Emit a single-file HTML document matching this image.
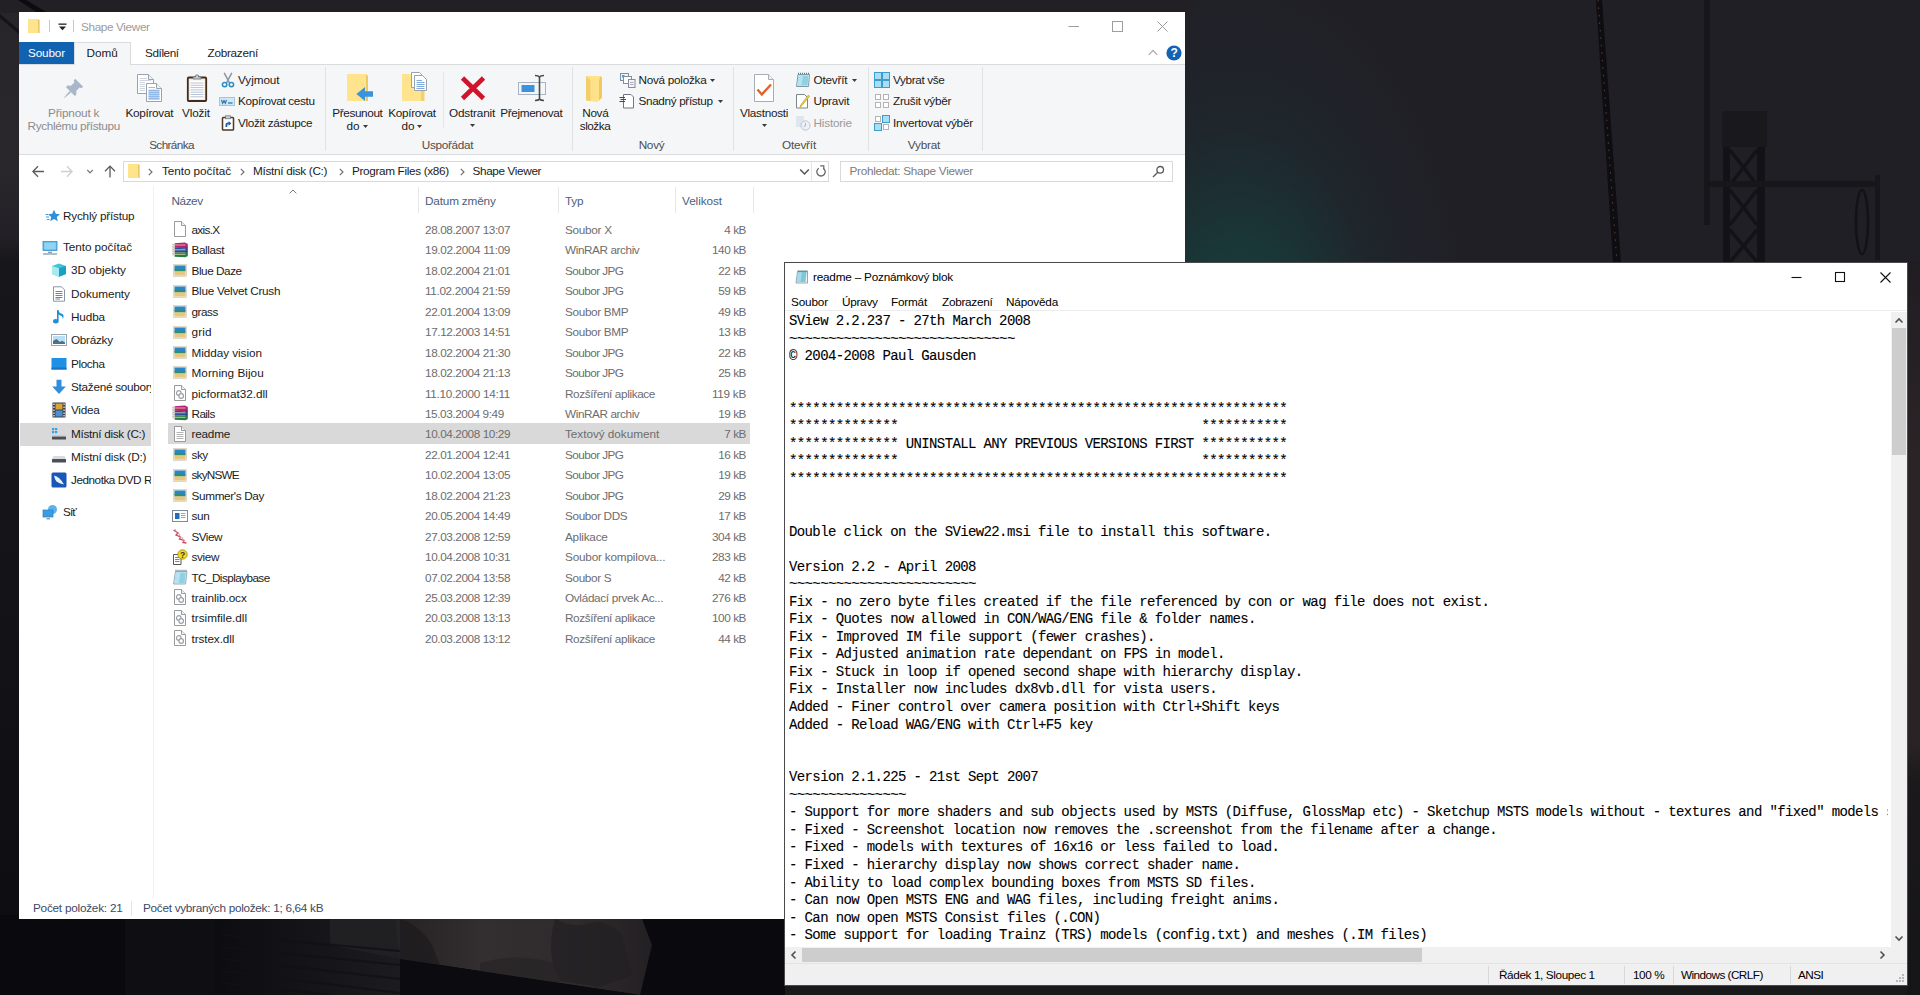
<!DOCTYPE html>
<html lang="cs">
<head>
<meta charset="utf-8">
<title>Shape Viewer</title>
<style>
*{box-sizing:border-box;margin:0;padding:0}
html,body{width:1920px;height:995px;overflow:hidden;background:#222027}
body{position:relative;font-family:"Liberation Sans",sans-serif;font-size:11.5px;letter-spacing:-0.15px;color:#1b1b1b}
.abs{position:absolute}
#desk{position:absolute;left:0;top:0;width:1920px;height:995px;overflow:hidden;background:#232128}
/* ---------- Explorer ---------- */
#ex{position:absolute;left:19px;top:12px;width:1166px;height:907px;background:#fff;overflow:hidden}
#ex .t{position:absolute;white-space:nowrap;line-height:14px}
#ribbon{position:absolute;left:0;top:52px;width:1166px;height:91px;background:#f5f6f7;border-top:1px solid #dadbdc;border-bottom:1px solid #dadbdc}
.sep{position:absolute;top:58px;width:1px;height:84px;background:#e2e3e4}
.gl{color:#4d4d4d}
.gr{color:#6d6d6d}
.row{position:absolute;left:148px;width:583px;height:20px}
/* ---------- Notepad ---------- */
#np{position:absolute;left:784px;top:262px;width:1124px;height:724px;background:#fff;border:1px solid #4a4a4c;overflow:hidden}
#np .t{position:absolute;white-space:nowrap;line-height:14px;color:#000}
#txt{position:absolute;left:4px;top:50px;width:1099px;height:634px;overflow:hidden;white-space:pre;font-family:"Liberation Mono",monospace;font-size:14px;letter-spacing:-0.62px;line-height:17.54px;color:#000;-webkit-text-stroke:0.1px #000}
</style>
</head>
<body>
<!--ICONS--><!--/ICONS-->
<div id="desk">
<!--DESK-->
<div class="abs" style="left:0;top:0;width:1920px;height:995px;background:radial-gradient(ellipse 235px 400px at 1238px 370px, rgba(22,72,66,0.95) 0%, rgba(22,66,62,0.7) 30%, rgba(26,50,54,0.35) 62%, rgba(33,31,38,0) 100%),#211f26"></div>
<!-- left strip -->
<div class="abs" style="left:0;top:0;width:20px;height:995px;background:linear-gradient(180deg,#27242a 0,#29262c 170px,#232127 235px,#17161b 262px,#141318 600px,#0c0b0f 995px)"></div>
<!-- top strip -->
<div class="abs" style="left:0;top:0;width:1190px;height:13px;background:#221f25"></div>
<svg class="abs" style="left:0;top:0" width="120" height="60" viewBox="0 0 120 60"><path d="M18 0 L26 0 L48 13 L38 13 Z" fill="#0c0b0f"/><path d="M0 14 L19 30 L19 34 L0 18 Z" fill="#141317"/></svg>
<!-- bottom strip -->
<svg class="abs" style="left:0;top:915px" width="790" height="80" viewBox="0 0 790 80">
  <defs>
    <linearGradient id="bsky" x1="0" y1="0" x2="1" y2="0"><stop offset="0" stop-color="#262325"/><stop offset="0.35" stop-color="#332e2f"/><stop offset="0.7" stop-color="#2f2b2d"/><stop offset="1" stop-color="#232023"/></linearGradient>
    <linearGradient id="bwall" x1="0" y1="0" x2="1" y2="0"><stop offset="0" stop-color="#0d0c10"/><stop offset="1" stop-color="#1c1b1e"/></linearGradient>
  </defs>
  <rect x="0" y="0" width="790" height="80" fill="#0a090d"/>
  <rect x="125" y="0" width="90" height="80" fill="#0f0e12"/>
  <path d="M215 4 H400 V80 H215 Z" fill="url(#bwall)"/>
  <path d="M330 4 L400 4 L400 44 L330 30 Z" fill="#201f22"/>
  <path d="M395 4 H642 L652 30 L640 80 L400 44 Z" fill="url(#bsky)"/>
  <path d="M400 44 L640 80 L400 80 Z" fill="#0c0b0f"/>
  <path d="M400 4 Q420 10 432 30 L440 50 L400 44 Z" fill="#1e1b1e" opacity="0.8"/>
  <path d="M555 4 Q575 14 590 8 Q610 4 622 20 L632 60 L600 72 L560 66 Q545 40 555 4 Z" fill="#232023" opacity="0.75"/>
  <path d="M480 48 Q520 36 560 50 L560 68 L480 56 Z" fill="#262326" opacity="0.7"/>
  <g stroke="#121115" stroke-width="2" opacity="0.8"><path d="M222 20 L400 36 M222 32 L400 50 M222 44 L400 64 M222 56 L400 78 M222 68 L330 80"/></g>
</svg>
<!-- below notepad & right strip -->
<div class="abs" style="left:785px;top:985px;width:1135px;height:10px;background:#19181b"></div>
<div class="abs" style="left:1907px;top:262px;width:13px;height:733px;background:linear-gradient(180deg,#201d22 0,#2b2427 200px,#2a2325 480px,#1b191b 520px,#151416 733px)"></div>
<!-- railway mast silhouettes -->
<svg class="abs" style="left:1185px;top:0" width="735" height="263" viewBox="0 0 735 263">
  <path d="M411 0 L417 0 L436 263 L428 263 Z" fill="#0e0d11"/>
  <path d="M413 0 L432 263" stroke="#7a4a2a" stroke-width="1" stroke-dasharray="1.500 6" opacity="0.8" fill="none"/>
  <rect x="519" y="0" width="6" height="225" fill="#17161b"/>
  <rect x="537" y="111" width="45" height="36" fill="#19181d"/>
  <rect x="538" y="147" width="7" height="116" fill="#131217"/>
  <rect x="572" y="147" width="8" height="116" fill="#131217"/>
  <path d="M545 150 L572 185 M572 150 L545 185 M545 190 L572 225 M572 190 L545 225 M545 230 L572 262 M572 230 L545 262" stroke="#131217" stroke-width="3.500"/>
  <rect x="525" y="181" width="170" height="6" fill="#17161b"/>
  <rect x="690" y="175" width="5" height="85" fill="#17161b"/>
  <ellipse cx="677" cy="222" rx="6" ry="32" fill="none" stroke="#131217" stroke-width="2.500"/>
</svg>
<!--/DESK-->
</div>

<div id="ex">
<!--EX-->
<svg class="abs" style="left:8px;top:6px;" width="14" height="16" viewBox="0 0 14 16"><path d="M1 1 H11 L12.5 2.5 V15 H1 Z" fill="#ffe48d"/><path d="M11 1 L12.5 2.5 V15 H11.3 Z" fill="#e9c45c"/></svg>
<div class="abs" style="left:30px;top:8px;width:1px;height:12px;background:#c8c8c8;"></div>
<svg class="abs" style="left:39px;top:11px" width="9" height="8" viewBox="0 0 9 8"><rect x="0.5" y="0.5" width="8" height="1.3" fill="#222"/><path d="M1 3.6 H8 L4.5 7.2 Z" fill="#222"/></svg>
<div class="abs" style="left:54px;top:8px;width:1px;height:12px;background:#c8c8c8;"></div>
<div class="t " style="left:62px;top:8px;color:#9b9b9b;font-size:11.75px;letter-spacing:-0.36px">Shape Viewer</div>
<svg class="abs" style="left:1041px;top:2px" width="120" height="26" viewBox="0 0 120 26" fill="none" stroke="#9d9d9d" stroke-width="1"><path d="M8.5 12.5 H19"/><rect x="52.5" y="7.5" width="10" height="10"/><path d="M97.5 7.5 L107.5 17.5 M107.5 7.5 L97.5 17.5"/></svg>
<div class="abs" style="left:0px;top:30px;width:55px;height:22px;background:#1162b1;"></div>
<div class="t " style="left:9px;top:34px;color:#fff;font-size:11.75px;letter-spacing:-0.17px">Soubor</div>
<div class="abs" style="left:55px;top:30px;width:57px;height:23px;background:#f5f6f7;border:1px solid #dadbdc;border-bottom:none;z-index:3"></div>
<div class="t " style="left:67.5px;top:34px;z-index:4;font-size:11.75px;letter-spacing:-0.03px">Domů</div>
<div class="t " style="left:126px;top:34px;font-size:11.75px;letter-spacing:-0.41px">Sdílení</div>
<div class="t " style="left:188.5px;top:34px;font-size:11.75px;letter-spacing:-0.28px">Zobrazení</div>
<svg class="abs" style="left:1129px;top:37px" width="10" height="7" viewBox="0 0 10 7" fill="none" stroke="#a8a8a8" stroke-width="1.2"><path d="M0.8 5.8 L5 1.4 L9.2 5.8"/></svg>
<svg class="abs" style="left:1147px;top:33px" width="16" height="16" viewBox="0 0 16 16"><circle cx="8" cy="8" r="7.6" fill="#1263b4"/><text x="8" y="12.2" text-anchor="middle" font-family="Liberation Sans, sans-serif" font-weight="bold" font-size="12" fill="#fff">?</text></svg>
<div id="ribbon"></div>
<div class="abs" style="left:306px;top:55px;width:1px;height:84px;background:#e1e2e3;"></div>
<div class="abs" style="left:552.5px;top:55px;width:1px;height:84px;background:#e1e2e3;"></div>
<div class="abs" style="left:714px;top:55px;width:1px;height:84px;background:#e1e2e3;"></div>
<div class="abs" style="left:848.5px;top:55px;width:1px;height:84px;background:#e1e2e3;"></div>
<div class="abs" style="left:962.5px;top:55px;width:1px;height:84px;background:#e1e2e3;"></div>
<div class="abs" style="left:423.5px;top:60px;width:1px;height:56px;background:#e4e5e6;"></div>
<div class="t gl" style="left:52.5px;width:200px;text-align:center;top:126px;font-size:11.75px;letter-spacing:-0.62px">Schránka</div>
<div class="t gl" style="left:328.5px;width:200px;text-align:center;top:126px;font-size:11.75px;letter-spacing:-0.32px">Uspořádat</div>
<div class="t gl" style="left:532.5px;width:200px;text-align:center;top:126px;font-size:11.75px;letter-spacing:-0.26px">Nový</div>
<div class="t gl" style="left:680px;width:200px;text-align:center;top:126px;font-size:11.75px;letter-spacing:-0.19px">Otevřít</div>
<div class="t gl" style="left:805px;width:200px;text-align:center;top:126px;font-size:11.75px;letter-spacing:-0.19px">Vybrat</div>
<svg class="abs" style="left:43px;top:64px;" width="24" height="24" viewBox="0 0 24 24"><path d="M13.2 2.8 L21.2 10.8 L19.4 12.2 L17.6 11.6 L14.2 15 L14.4 18.6 L12.8 20 L4 11.2 L5.4 9.6 L9 9.8 L12.4 6.4 L11.8 4.6 Z" fill="#aab7cb"/><path d="M7.6 15 L9 16.4 L2.4 22 L2 21.6 Z" fill="#aab7cb"/></svg>
<div class="t rb" style="left:-45.3px;width:200px;text-align:center;top:94px;color:#8c8c8c;font-size:11.75px;letter-spacing:-0.17px">Připnout k</div>
<div class="t rb" style="left:-45.3px;width:200px;text-align:center;top:107px;color:#8c8c8c;font-size:11.75px;letter-spacing:-0.33px">Rychlému přístupu</div>
<svg class="abs" style="left:117px;top:61px;" width="28" height="30" viewBox="0 0 28 30"><path d="M1.500 1.500 H12.500 L17.500 6.500 V20.500 H1.500 Z" fill="#fff" stroke="#9aa3ad"/><path d="M12.500 1.500 V6.500 H17.500" fill="#eef1f4" stroke="#9aa3ad"/><g stroke="#cfd6df"><path d="M3.500 5.500 H11 M3.500 7.500 H15 M3.500 9.500 H9 M3.500 11.500 H9 M3.500 13.500 H9 M3.500 15.500 H9 M3.500 17.500 H9"/></g><path d="M10.500 10.500 H20.500 L25.500 15.500 V28.500 H10.500 Z" fill="#fff" stroke="#9aa3ad"/><path d="M20.500 10.500 V15.500 H25.500" fill="#eef1f4" stroke="#9aa3ad"/><rect x="12.500" y="16.500" width="11" height="10.500" fill="#b9d3ee"/><g stroke="#8fb6e4" stroke-width="0.900"><path d="M12.500 14.500 H19 M12.500 17.500 H23.500 M12.500 19.500 H23.500 M12.500 21.500 H23.500 M12.500 23.500 H23.500 M12.500 25.500 H23.500"/></g></svg>
<div class="t rb" style="left:30.3px;width:200px;text-align:center;top:94px;font-size:11.75px;letter-spacing:-0.29px">Kopírovat</div>
<svg class="abs" style="left:166px;top:60px;" width="24" height="31" viewBox="0 0 24 31"><rect x="2.800" y="5.500" width="18.400" height="23.500" rx="1" fill="#f3ede4" stroke="#3f2c1c" stroke-width="1.800"/><rect x="5" y="8.500" width="14" height="18.500" fill="#fff"/><g stroke="#b7c3d6" stroke-width="1"><path d="M5.500 11 H18.500 M5.500 13.300 H18.500 M5.500 15.600 H18.500 M5.500 17.900 H18.500 M5.500 20.200 H18.500 M5.500 22.500 H18.500 M5.500 24.800 H18.500"/></g><path d="M8 7 V5 H10.500 V3.400 Q12 2.200 13.500 3.400 V5 H16 V7 Z" fill="#c9ced4" stroke="#6b6f74" stroke-width="0.800"/></svg>
<div class="t rb" style="left:77px;width:200px;text-align:center;top:94px;font-size:11.75px;letter-spacing:-0.15px">Vložit</div>
<svg class="abs" style="left:201px;top:60px;" width="16" height="16" viewBox="0 0 16 16"><path d="M4.2 0.8 L9.6 11.2 M11.8 0.8 L6.4 11.2" stroke="#8f979f" stroke-width="1.5" fill="none"/><circle cx="4.6" cy="12.6" r="2.2" fill="none" stroke="#2a8fc4" stroke-width="1.5"/><circle cx="11.4" cy="12.6" r="2.2" fill="none" stroke="#2a8fc4" stroke-width="1.5"/></svg>
<div class="t rb" style="left:219px;top:61px;font-size:11.75px;letter-spacing:-0.07px">Vyjmout</div>
<svg class="abs" style="left:200px;top:81px;" width="16" height="16" viewBox="0 0 16 16"><rect x="0.5" y="4.5" width="15" height="8" fill="#cfe8f7" stroke="#9ec7e0"/><path d="M2.5 7 L3.7 10.4 L5 7.6 L6.3 10.4 L7.5 7" fill="none" stroke="#2b6da3" stroke-width="1.1"/><path d="M9 10 H13.5" stroke="#2b6da3" stroke-width="1.2"/></svg>
<div class="t rb" style="left:219px;top:82px;font-size:11.75px;letter-spacing:-0.33px">Kopírovat cestu</div>
<svg class="abs" style="left:201px;top:103px;" width="16" height="16" viewBox="0 0 16 16"><rect x="2.5" y="2.5" width="11" height="12.5" rx="0.8" fill="#fff" stroke="#4e3926" stroke-width="1.5"/><rect x="5.5" y="0.8" width="5" height="3" fill="#c9ced4" stroke="#6b6f74" stroke-width="0.7"/><path d="M5.5 12 V9.5 Q5.5 7.5 8 7.5 H8.6 V6 L11.4 8.4 L8.6 10.8 V9.3 H8 Q7.3 9.3 7.3 10 V12 Z" fill="#1f5fb2"/></svg>
<div class="t rb" style="left:219px;top:104px;font-size:11.75px;letter-spacing:-0.32px">Vložit zástupce</div>
<svg class="abs" style="left:326px;top:61px;" width="30" height="30" viewBox="0 0 30 30"><path d="M2 1 H21 L23 3 V28 H2 Z" fill="#ffe48d"/><path d="M21 1 L23 3 V28 H21 Z" fill="#ecc961"/><path d="M28 18.2 V23.8 H20 V28 L11.4 21 L20 14 V18.2 Z" fill="#3a93dc"/></svg>
<div class="t rb" style="left:238.4px;width:200px;text-align:center;top:94px;font-size:11.75px;letter-spacing:-0.38px">Přesunout</div>
<div class="t rb" style="left:234px;width:200px;text-align:center;top:107px;font-size:11.75px;letter-spacing:0.04px">do</div>
<svg class="abs" style="left:343.8px;top:112.5px" width="5" height="3" viewBox="0 0 5 3"><path d="M0 0 H5 L2.5 3 Z" fill="#3a3a3a"/></svg>
<svg class="abs" style="left:381px;top:59px;" width="30" height="32" viewBox="0 0 30 32"><path d="M2 3 H19 L21 5 V30 H2 Z" fill="#ffe48d"/><path d="M19 3 L21 5 V30 H24.5 V12 H19 Z" fill="#f2d06b"/><path d="M11.5 1.500 H19.5 L23.5 5.5 V16.5 H11.5 Z" fill="#fff" stroke="#9aa3ad"/><path d="M14.5 4.500 H22.500 L26.5 8.5 V19.5 H14.5 Z" fill="#fff" stroke="#9aa3ad"/><g stroke="#7fa9dd"><path d="M16.500 9.5 H22 M16.5 11.5 H24.500 M16.5 13.5 H24.500 M16.5 15.5 H24.5 M16.5 17.5 H24.500"/></g></svg>
<div class="t rb" style="left:293px;width:200px;text-align:center;top:94px;font-size:11.75px;letter-spacing:-0.29px">Kopírovat</div>
<div class="t rb" style="left:289px;width:200px;text-align:center;top:107px;font-size:11.75px;letter-spacing:0.04px">do</div>
<svg class="abs" style="left:398px;top:112.5px" width="5" height="3" viewBox="0 0 5 3"><path d="M0 0 H5 L2.5 3 Z" fill="#3a3a3a"/></svg>
<svg class="abs" style="left:441px;top:63px;" width="26" height="26" viewBox="0 0 26 26"><path d="M2.5 3 L23.5 23.5 M23.5 3 L2.5 23.5" stroke="#d0142c" stroke-width="4.6" fill="none"/></svg>
<div class="t rb" style="left:353px;width:200px;text-align:center;top:94px;font-size:11.75px;letter-spacing:-0.18px">Odstranit</div>
<svg class="abs" style="left:450.5px;top:111.5px" width="5" height="3" viewBox="0 0 5 3"><path d="M0 0 H5 L2.5 3 Z" fill="#3a3a3a"/></svg>
<svg class="abs" style="left:498px;top:62px;" width="31" height="28" viewBox="0 0 31 28"><rect x="1.500" y="8.5" width="27" height="12" fill="#f3f5f8" stroke="#a9b4c2"/><rect x="4.500" y="11" width="13" height="7" fill="#3a93dc"/><path d="M18 1.500 Q21.500 1.500 22.500 3 Q23.500 1.500 27 1.500 M22.500 3 V25 M18 26.500 Q21.500 26.500 22.500 25 Q23.500 26.500 27 26.500" fill="none" stroke="#4a4a4a" stroke-width="1.600"/></svg>
<div class="t rb" style="left:412.3px;width:200px;text-align:center;top:94px;font-size:11.75px;letter-spacing:-0.35px">Přejmenovat</div>
<svg class="abs" style="left:564px;top:62px;" width="22" height="29" viewBox="0 0 22 29"><path d="M3 2 H17.500 L19 4 V23.500 L14.500 28 L3 26.500 Z" fill="#ffe28a"/><path d="M3 2 L7.500 6 V27 L3 26.500 Z" fill="#f3cf6c"/><path d="M17.500 2 L19 4 V23.500 L16 26.500 V7 Z" fill="#f0c95f"/></svg>
<div class="t rb" style="left:476.3px;width:200px;text-align:center;top:94px;font-size:11.75px;letter-spacing:-0.35px">Nová</div>
<div class="t rb" style="left:476px;width:200px;text-align:center;top:107px;font-size:11.75px;letter-spacing:-0.49px">složka</div>
<svg class="abs" style="left:600px;top:60px;" width="17" height="16" viewBox="0 0 17 16"><rect x="1.500" y="1.500" width="8" height="7" fill="#eaf4fb" stroke="#7f8f9d"/><rect x="3" y="3" width="2.500" height="2.500" fill="#4ea3d8"/><rect x="4.500" y="4.500" width="8" height="7" fill="#fff" stroke="#7f8f9d"/><rect x="9.500" y="7.500" width="6.500" height="8" fill="#f5f5f5" stroke="#7f8f9d"/><path d="M11 10.500 H14.500 M11 12.500 H14.500" stroke="#aab"/></svg>
<div class="t rb" style="left:619.5px;top:61px;font-size:11.75px;letter-spacing:-0.27px">Nová položka</div>
<svg class="abs" style="left:691px;top:67px" width="5" height="3" viewBox="0 0 5 3"><path d="M0 0 H5 L2.5 3 Z" fill="#3a3a3a"/></svg>
<svg class="abs" style="left:600px;top:81px;" width="16" height="16" viewBox="0 0 16 16"><path d="M4.500 1.500 H12 L14.500 4 V15 H4.500 Z" fill="#fff" stroke="#6f7780"/><path d="M0.500 4.500 H6 M1.500 6.500 H7 M0.500 8.500 H6" stroke="#3b4a5c" stroke-width="1.100"/></svg>
<div class="t rb" style="left:619.5px;top:82px;font-size:11.75px;letter-spacing:-0.35px">Snadný přístup</div>
<svg class="abs" style="left:698.5px;top:88px" width="5" height="3" viewBox="0 0 5 3"><path d="M0 0 H5 L2.5 3 Z" fill="#3a3a3a"/></svg>
<svg class="abs" style="left:733px;top:61px;" width="24" height="30" viewBox="0 0 24 30"><path d="M2.500 1.500 H16.500 L21.500 6.500 V28.500 H2.500 Z" fill="#fff" stroke="#a6adb5"/><path d="M16.500 1.500 V6.500 H21.500" fill="#eef1f4" stroke="#a6adb5"/><path d="M5.500 16.500 L9.800 21.500 L19 11.500" fill="none" stroke="#e2622a" stroke-width="2.400"/></svg>
<div class="t rb" style="left:645px;width:200px;text-align:center;top:94px;font-size:11.75px;letter-spacing:-0.28px">Vlastnosti</div>
<svg class="abs" style="left:742.5px;top:111.5px" width="5" height="3" viewBox="0 0 5 3"><path d="M0 0 H5 L2.5 3 Z" fill="#3a3a3a"/></svg>
<svg class="abs" style="left:776px;top:60px;" width="16" height="16" viewBox="0 0 16 16"><path d="M3 2.500 H14.500 L13.500 14.500 H1.500 Z" fill="#dff1f8" stroke="#7f9aa8"/><path d="M3.500 3.500 H13.300 L12.600 13.500 H2.500 Z" fill="#8fd0e2"/><path d="M3.500 3.500 H8 L6.500 13.500 H2.500 Z" fill="#b5e2ee"/><path d="M3 1.500 H14.500" stroke="#5b7d8c" stroke-width="1.400" stroke-dasharray="1 1"/></svg>
<div class="t rb" style="left:794.5px;top:61px;font-size:11.75px;letter-spacing:-0.19px">Otevřít</div>
<svg class="abs" style="left:832.5px;top:67px" width="5" height="3" viewBox="0 0 5 3"><path d="M0 0 H5 L2.5 3 Z" fill="#3a3a3a"/></svg>
<svg class="abs" style="left:776px;top:81px;" width="16" height="16" viewBox="0 0 16 16"><path d="M1.500 1.500 H9.500 L12.500 4.500 V15 H1.500 Z" fill="#fff" stroke="#7d858d"/><path d="M14.600 3.200 L6.500 13 L5 14.500 L5.600 12.200 L13.200 2.200 Z" fill="#f3d64a" stroke="#b89a1c" stroke-width="0.700"/></svg>
<div class="t rb" style="left:794.5px;top:82px;font-size:11.75px;letter-spacing:-0.20px">Upravit</div>
<svg class="abs" style="left:776px;top:103px;" width="16" height="16" viewBox="0 0 16 16"><path d="M1 1 H9 V12 H1 Z" fill="#dfe6ee"/><circle cx="10.500" cy="10.500" r="4.600" fill="#eef2f6" stroke="#b9c4d0"/><path d="M10.500 8 V10.800 L8.600 11.600" fill="none" stroke="#a6b2c0"/></svg>
<div class="t rb" style="left:794.5px;top:104px;color:#9a9a9a;font-size:11.75px;letter-spacing:-0.19px">Historie</div>
<svg class="abs" style="left:855px;top:60px;" width="16" height="16" viewBox="0 0 16 16"><g fill="#a9def5" stroke="#3d9dcf" stroke-width="1"><rect x="0.500" y="0.500" width="7" height="7"/><rect x="8.500" y="0.500" width="7" height="7"/><rect x="0.500" y="8.500" width="7" height="7"/><rect x="8.500" y="8.500" width="7" height="7"/></g></svg>
<div class="t rb" style="left:874px;top:61px;font-size:11.75px;letter-spacing:-0.36px">Vybrat vše</div>
<svg class="abs" style="left:855px;top:81px;" width="16" height="16" viewBox="0 0 16 16"><g fill="#fff" stroke="#b4b4b4" stroke-width="1"><rect x="1.500" y="1.500" width="5" height="5"/><rect x="9.500" y="1.500" width="5" height="5"/><rect x="1.500" y="9.500" width="5" height="5"/><rect x="9.500" y="9.500" width="5" height="5"/></g></svg>
<div class="t rb" style="left:874px;top:82px;font-size:11.75px;letter-spacing:-0.27px">Zrušit výběr</div>
<svg class="abs" style="left:855px;top:103px;" width="16" height="16" viewBox="0 0 16 16"><g stroke-width="1"><rect x="1.500" y="1.500" width="5" height="5" fill="#fff" stroke="#b4b4b4"/><rect x="8.500" y="0.500" width="7" height="7" fill="#a9def5" stroke="#3d9dcf"/><rect x="0.500" y="8.500" width="7" height="7" fill="#a9def5" stroke="#3d9dcf"/><rect x="9.500" y="9.500" width="5" height="5" fill="#fff" stroke="#b4b4b4"/></g></svg>
<div class="t rb" style="left:874px;top:104px;font-size:11.75px;letter-spacing:-0.23px">Invertovat výběr</div>
<svg class="abs" style="left:13px;top:153px" width="90" height="13" viewBox="0 0 90 13" fill="none" stroke-width="1.3"><path d="M12 6.5 H1 M6 1.3 L0.9 6.5 L6 11.7" stroke="#5b5b5b"/><path d="M29 6.5 H40 M35 1.3 L40.1 6.5 L35 11.7" stroke="#cfcfcf"/><path d="M55.3 5 L58 7.8 L60.7 5" stroke="#777" stroke-width="1.2"/><path d="M78 12.5 V1.2 M73 6.2 L78 1.1 L83 6.2" stroke="#5b5b5b"/></svg>
<div class="abs" style="left:104px;top:149px;width:706px;height:21px;background:#fff;border:1px solid #d9d9d9"></div>
<div class="abs" style="left:792px;top:150px;width:1px;height:19px;background:#e5e5e5;"></div>
<svg class="abs" style="left:108px;top:151px;" width="14" height="16" viewBox="0 0 14 16"><path d="M1 1 H11 L12.5 2.5 V15 H1 Z" fill="#ffe48d"/><path d="M11 1 L12.5 2.5 V15 H11.3 Z" fill="#e9c45c"/></svg>
<svg class="abs" style="left:129px;top:155.5px" width="5" height="8" viewBox="0 0 5 8" fill="none" stroke="#6a6a6a" stroke-width="1.1"><path d="M0.8 0.8 L4 4 L0.8 7.2"/></svg>
<svg class="abs" style="left:221px;top:155.5px" width="5" height="8" viewBox="0 0 5 8" fill="none" stroke="#6a6a6a" stroke-width="1.1"><path d="M0.8 0.8 L4 4 L0.8 7.2"/></svg>
<svg class="abs" style="left:320px;top:155.5px" width="5" height="8" viewBox="0 0 5 8" fill="none" stroke="#6a6a6a" stroke-width="1.1"><path d="M0.8 0.8 L4 4 L0.8 7.2"/></svg>
<svg class="abs" style="left:440.5px;top:155.5px" width="5" height="8" viewBox="0 0 5 8" fill="none" stroke="#6a6a6a" stroke-width="1.1"><path d="M0.8 0.8 L4 4 L0.8 7.2"/></svg>
<div class="t " style="left:143px;top:152px;font-size:11.75px;letter-spacing:-0.07px">Tento počítač</div>
<div class="t " style="left:234px;top:152px;font-size:11.75px;letter-spacing:-0.30px">Místní disk (C:)</div>
<div class="t " style="left:333px;top:152px;font-size:11.75px;letter-spacing:-0.34px">Program Files (x86)</div>
<div class="t " style="left:453.5px;top:152px;font-size:11.75px;letter-spacing:-0.36px">Shape Viewer</div>
<svg class="abs" style="left:780px;top:156px" width="11" height="8" viewBox="0 0 11 8" fill="none" stroke="#555" stroke-width="1.5"><path d="M1.2 1.5 L5.5 6 L9.8 1.5"/></svg>
<svg class="abs" style="left:796px;top:153px" width="12" height="13" viewBox="0 0 12 13" fill="none" stroke="#666" stroke-width="1.3"><path d="M8.2 3.2 A4.2 4.2 0 1 1 3.8 3.2"/><path d="M5.2 0.8 H8.8 V4.4" stroke-width="1.2"/></svg>
<div class="abs" style="left:821px;top:149px;width:333px;height:21px;background:#fff;border:1px solid #d9d9d9"></div>
<div class="t " style="left:830.5px;top:152px;color:#7b7b7b;font-size:11.75px;letter-spacing:-0.28px">Prohledat: Shape Viewer</div>
<svg class="abs" style="left:1133px;top:153px" width="13" height="13" viewBox="0 0 13 13" fill="none" stroke="#5a5a5a" stroke-width="1.3"><circle cx="8.2" cy="4.8" r="3.3"/><path d="M5.8 7.2 L1 12"/></svg>
<div class="abs" style="left:134px;top:174px;width:1px;height:712px;background:#f0f0f0;"></div>
<div class="abs" style="left:1px;top:410.5px;width:131px;height:23px;background:#d9d9d9;"></div>
<div class="abs" style="left:0;top:0;width:132px;height:600px;overflow:hidden">
<svg class="abs" style="left:26px;top:196.3px;" width="16" height="16" viewBox="0 0 16 16"><path d="M9 1.800 L10.800 5.800 L15 6.200 L11.800 9 L12.800 13.200 L9 11 L5.200 13.200 L6.200 9 L3 6.200 L7.200 5.800 Z" fill="#2f8fdc"/><path d="M0.500 6.500 H3 M1 9 H4 M1.800 11.500 H4.500" stroke="#2f8fdc" stroke-width="0.900"/></svg>
<div class="t " style="left:44px;top:197.3px;font-size:11.75px;letter-spacing:-0.22px">Rychlý přístup</div>
<svg class="abs" style="left:23px;top:226.7px;" width="16" height="16" viewBox="0 0 16 16"><rect x="1" y="2.500" width="14" height="9" fill="#57b6ea" stroke="#3d8fc4" stroke-width="0.800"/><rect x="2.200" y="3.600" width="11.600" height="6.800" fill="#8fd4f5"/><path d="M6 13.200 H10 M1 15 H15" stroke="#5e7f9a" stroke-width="1.100"/></svg>
<div class="t " style="left:44px;top:227.7px;font-size:11.75px;letter-spacing:-0.07px">Tento počítač</div>
<svg class="abs" style="left:32px;top:250px;" width="16" height="16" viewBox="0 0 16 16"><path d="M1 4 L8 1.500 L15 4 V12 L8 14.800 L1 12 Z" fill="#3fc3d8"/><path d="M1 4 L8 6.300 V14.800 L1 12 Z" fill="#a6ecef"/><path d="M8 6.300 L15 4 V12 L8 14.800 Z" fill="#1aa0c4"/></svg>
<div class="t " style="left:52px;top:251px;font-size:11.75px;letter-spacing:-0.06px">3D objekty</div>
<svg class="abs" style="left:32px;top:273.5px;" width="16" height="16" viewBox="0 0 16 16"><path d="M2.500 0.800 H10.500 L13.500 3.800 V15.200 H2.500 Z" fill="#fff" stroke="#8a96a3"/><path d="M4.500 5.500 H11.500 M4.500 7.500 H11.500 M4.500 9.500 H11.500 M4.500 11.500 H11.500 M4.500 13 H9" stroke="#4a7fb5" stroke-width="0.900"/></svg>
<div class="t " style="left:52px;top:274.5px;font-size:11.75px;letter-spacing:-0.06px">Dokumenty</div>
<svg class="abs" style="left:32px;top:297px;" width="16" height="16" viewBox="0 0 16 16"><path d="M6.800 1 V11.500" stroke="#1e90d9" stroke-width="1.600"/><path d="M6.800 1 Q8 4 11.500 5 Q13.500 6.500 11.800 10 Q12.200 6.800 6.800 5.200 Z" fill="#1e90d9"/><ellipse cx="4.800" cy="12.300" rx="2.800" ry="2.200" fill="#1e90d9"/></svg>
<div class="t " style="left:52px;top:298px;font-size:11.75px;letter-spacing:-0.12px">Hudba</div>
<svg class="abs" style="left:32px;top:320.3px;" width="16" height="16" viewBox="0 0 16 16"><rect x="0.500" y="2.500" width="15" height="11" fill="#fff" stroke="#9aa5b1"/><rect x="2" y="4" width="12" height="8" fill="#b9dff4"/><path d="M2 12 V9 L5.500 7 L9 10 L11 8.800 L14 10.500 V12 Z" fill="#4d6f87"/></svg>
<div class="t " style="left:52px;top:321.3px;font-size:11.75px;letter-spacing:-0.28px">Obrázky</div>
<svg class="abs" style="left:32px;top:343.7px;" width="16" height="16" viewBox="0 0 16 16"><rect x="0.500" y="2" width="15" height="11.500" fill="#1e90e6"/><rect x="0.500" y="11.600" width="15" height="1.900" fill="#1672c4"/></svg>
<div class="t " style="left:52px;top:344.7px;font-size:11.75px;letter-spacing:-0.38px">Plocha</div>
<svg class="abs" style="left:32px;top:367px;" width="16" height="16" viewBox="0 0 16 16"><path d="M5.500 0.800 H10.500 V7.500 H14.800 L8 15 L1.200 7.500 H5.500 Z" fill="#2f8fdc"/></svg>
<div class="t " style="left:52px;top:368px;font-size:11.75px;letter-spacing:-0.28px">Stažené soubory</div>
<svg class="abs" style="left:32px;top:390.3px;" width="16" height="16" viewBox="0 0 16 16"><rect x="1.500" y="0.500" width="13" height="15" fill="#3b3f46"/><rect x="4.500" y="1.500" width="7" height="6" fill="#d9a23a"/><rect x="4.500" y="8.500" width="7" height="6" fill="#4c8fd0"/><g fill="#e8e8e8"><rect x="2.300" y="1.500" width="1.300" height="1.500"/><rect x="2.300" y="4.500" width="1.300" height="1.500"/><rect x="2.300" y="7.500" width="1.300" height="1.500"/><rect x="2.300" y="10.500" width="1.300" height="1.500"/><rect x="2.300" y="13" width="1.300" height="1.500"/><rect x="12.400" y="1.500" width="1.300" height="1.500"/><rect x="12.400" y="4.500" width="1.300" height="1.500"/><rect x="12.400" y="7.500" width="1.300" height="1.500"/><rect x="12.400" y="10.500" width="1.300" height="1.500"/><rect x="12.400" y="13" width="1.300" height="1.500"/></g></svg>
<div class="t " style="left:52px;top:391.3px;font-size:11.75px;letter-spacing:-0.25px">Videa</div>
<svg class="abs" style="left:32px;top:413.7px;" width="16" height="16" viewBox="0 0 16 16"><g fill="#2aa3ea"><rect x="1" y="2" width="2.200" height="2.200"/><rect x="4" y="2" width="2.200" height="2.200"/><rect x="1" y="5" width="2.200" height="2.200"/><rect x="4" y="5" width="2.200" height="2.200"/></g><rect x="1" y="10" width="14" height="3.600" rx="0.600" fill="#4a4f57"/><rect x="1" y="9" width="14" height="1.600" fill="#c9cdd3"/></svg>
<div class="t " style="left:52px;top:414.7px;font-size:11.75px;letter-spacing:-0.30px">Místní disk (C:)</div>
<svg class="abs" style="left:32px;top:437px;" width="16" height="16" viewBox="0 0 16 16"><path d="M2.500 7 H13.500 L15 10 H1 Z" fill="#d7dade"/><rect x="1" y="10" width="14" height="3.600" rx="0.600" fill="#4a4f57"/></svg>
<div class="t " style="left:52px;top:438px;font-size:11.75px;letter-spacing:-0.24px">Místní disk (D:)</div>
<svg class="abs" style="left:32px;top:460.3px;" width="16" height="16" viewBox="0 0 16 16"><rect x="0.500" y="0.500" width="15" height="15" rx="1.500" fill="#1856b8"/><path d="M3 3.500 Q8.500 4.500 13 12.500 Q8 11.500 5.500 9.500 Q3.500 7 3 3.500 Z" fill="#eaf2ff"/></svg>
<div class="t " style="left:52px;top:461.3px;font-size:11.75px;letter-spacing:-0.47px">Jednotka DVD RW (E:)</div>
<svg class="abs" style="left:23px;top:491.7px;" width="16" height="16" viewBox="0 0 16 16"><circle cx="10.500" cy="5.500" r="4.500" fill="#59b4ec"/><rect x="1" y="6" width="10" height="7" fill="#3d9be0" stroke="#2a7fc4" stroke-width="0.700"/><path d="M4.500 14.800 H8" stroke="#5e7f9a" stroke-width="1.100"/></svg>
<div class="t " style="left:44px;top:492.7px;font-size:11.75px;letter-spacing:-0.91px">Síť</div>
</div>
<div class="t " style="left:152.5px;top:182.3px;color:#4c607a;font-size:11.75px;letter-spacing:-0.43px">Název</div>
<div class="t " style="left:406px;top:182.3px;color:#4c607a;font-size:11.75px;letter-spacing:-0.17px">Datum změny</div>
<div class="t " style="left:546px;top:182.3px;color:#4c607a;font-size:11.75px;letter-spacing:-0.20px">Typ</div>
<div class="t " style="left:663px;top:182.3px;color:#4c607a;font-size:11.75px;letter-spacing:-0.06px">Velikost</div>
<div class="abs" style="left:399px;top:175px;width:1px;height:26px;background:#e8e8e8;"></div>
<div class="abs" style="left:539px;top:175px;width:1px;height:26px;background:#e8e8e8;"></div>
<div class="abs" style="left:656px;top:175px;width:1px;height:26px;background:#e8e8e8;"></div>
<div class="abs" style="left:734px;top:175px;width:1px;height:26px;background:#e8e8e8;"></div>
<svg class="abs" style="left:269.5px;top:176.5px" width="8" height="5" viewBox="0 0 8 5" fill="none" stroke="#7a7a7a" stroke-width="1"><path d="M0.6 4.4 L4 1 L7.4 4.4"/></svg>
<div class="abs" style="left:149px;top:411.4px;width:582px;height:20.8px;background:#d9d9d9;"></div>
<svg class="abs" style="left:153px;top:209.3px;" width="16" height="16" viewBox="0 0 16 16"><path d="M2.500 0.500 H9.500 L13.500 4.500 V15.500 H2.500 Z" fill="#fff" stroke="#9a9a9a"/><path d="M9.500 0.500 V4.500 H13.500" fill="#f2f2f2" stroke="#9a9a9a"/></svg>
<div class="t " style="left:172.5px;top:210.9px;font-size:11.75px;letter-spacing:-0.66px">axis.X</div>
<div class="t gr" style="left:406px;top:210.9px;font-size:11.75px;letter-spacing:-0.40px">28.08.2007 13:07</div>
<div class="t gr" style="left:546px;top:210.9px;font-size:11.75px;letter-spacing:-0.28px">Soubor X</div>
<div class="t gr" style="right:439px;top:210.9px;font-size:11.75px;letter-spacing:-0.46px">4 kB</div>
<svg class="abs" style="left:153px;top:229.75px;" width="16" height="16" viewBox="0 0 16 16"><path d="M2.500 1.200 L13 0.600 L15.800 2 V5.400 L13.500 6.200 L2.500 5.800 Z" fill="#b3226f"/><path d="M2.500 5.800 L13.500 6.200 L15.800 5.400 V9.800 L13.500 10.600 L2.500 10.200 Z" fill="#2a4c9c"/><path d="M2.500 10.200 L13.500 10.600 L15.800 9.800 V14 L13.500 15.300 L2.500 14.700 Z" fill="#2a7a44"/><path d="M0.300 2.200 L2.500 1.200 V14.700 L0.300 13.800 Z" fill="#e9e4dc"/><path d="M0.300 2.200 L2.500 3.200 M0.300 4.500 L2.500 5.800 M0.300 6.800 L2.500 8 M0.300 9 L2.500 10.200 M0.300 11.300 L2.500 12.500" stroke="#8a8580" stroke-width="0.500"/><path d="M2.500 3 H13.500 M2.500 7.800 H13.500 M2.500 12.300 H13.500" stroke="#f0d9a8" stroke-width="0.800"/><path d="M13.500 6.200 L15.800 5.400 M13.500 10.600 L15.800 9.800" stroke="#10203c" stroke-width="0.500"/></svg>
<div class="t " style="left:172.5px;top:231.35px;font-size:11.75px;letter-spacing:-0.38px">Ballast</div>
<div class="t gr" style="left:406px;top:231.35px;font-size:11.75px;letter-spacing:-0.35px">19.02.2004 11:09</div>
<div class="t gr" style="left:546px;top:231.35px;font-size:11.75px;letter-spacing:-0.41px">WinRAR archiv</div>
<div class="t gr" style="right:439px;top:231.35px;font-size:11.75px;letter-spacing:-0.42px">140 kB</div>
<svg class="abs" style="left:153px;top:250.2px;" width="16" height="16" viewBox="0 0 16 16"><rect x="1.500" y="2.500" width="13" height="12" fill="#f1ead8" stroke="#cfc7b2" stroke-width="0.600"/><rect x="2.500" y="3.500" width="11" height="4.600" fill="#2b86c9"/><path d="M2.500 7 Q6 5.800 9 7.200 T13.500 7 V9.600 H2.500 Z" fill="#2f8f6a"/><rect x="2.500" y="9.400" width="11" height="4.100" fill="#e6c680"/></svg>
<div class="t " style="left:172.5px;top:251.8px;font-size:11.75px;letter-spacing:-0.45px">Blue Daze</div>
<div class="t gr" style="left:406px;top:251.8px;font-size:11.75px;letter-spacing:-0.40px">18.02.2004 21:01</div>
<div class="t gr" style="left:546px;top:251.8px;font-size:11.75px;letter-spacing:-0.56px">Soubor JPG</div>
<div class="t gr" style="right:439px;top:251.8px;font-size:11.75px;letter-spacing:-0.44px">22 kB</div>
<svg class="abs" style="left:153px;top:270.65px;" width="16" height="16" viewBox="0 0 16 16"><rect x="1.500" y="2.500" width="13" height="12" fill="#f1ead8" stroke="#cfc7b2" stroke-width="0.600"/><rect x="2.500" y="3.500" width="11" height="4.600" fill="#2b86c9"/><path d="M2.500 7 Q6 5.800 9 7.200 T13.500 7 V9.600 H2.500 Z" fill="#2f8f6a"/><rect x="2.500" y="9.400" width="11" height="4.100" fill="#e6c680"/></svg>
<div class="t " style="left:172.5px;top:272.25px;font-size:11.75px;letter-spacing:-0.28px">Blue Velvet Crush</div>
<div class="t gr" style="left:406px;top:272.25px;font-size:11.75px;letter-spacing:-0.35px">11.02.2004 21:59</div>
<div class="t gr" style="left:546px;top:272.25px;font-size:11.75px;letter-spacing:-0.56px">Soubor JPG</div>
<div class="t gr" style="right:439px;top:272.25px;font-size:11.75px;letter-spacing:-0.44px">59 kB</div>
<svg class="abs" style="left:153px;top:291.1px;" width="16" height="16" viewBox="0 0 16 16"><rect x="1.500" y="2.500" width="13" height="12" fill="#f1ead8" stroke="#cfc7b2" stroke-width="0.600"/><rect x="2.500" y="3.500" width="11" height="4.600" fill="#2b86c9"/><path d="M2.500 7 Q6 5.800 9 7.200 T13.500 7 V9.600 H2.500 Z" fill="#2f8f6a"/><rect x="2.500" y="9.400" width="11" height="4.100" fill="#e6c680"/></svg>
<div class="t " style="left:172.5px;top:292.7px;font-size:11.75px;letter-spacing:-0.47px">grass</div>
<div class="t gr" style="left:406px;top:292.7px;font-size:11.75px;letter-spacing:-0.40px">22.01.2004 13:09</div>
<div class="t gr" style="left:546px;top:292.7px;font-size:11.75px;letter-spacing:-0.33px">Soubor BMP</div>
<div class="t gr" style="right:439px;top:292.7px;font-size:11.75px;letter-spacing:-0.44px">49 kB</div>
<svg class="abs" style="left:153px;top:311.55px;" width="16" height="16" viewBox="0 0 16 16"><rect x="1.500" y="2.500" width="13" height="12" fill="#f1ead8" stroke="#cfc7b2" stroke-width="0.600"/><rect x="2.500" y="3.500" width="11" height="4.600" fill="#2b86c9"/><path d="M2.500 7 Q6 5.800 9 7.200 T13.500 7 V9.600 H2.500 Z" fill="#2f8f6a"/><rect x="2.500" y="9.400" width="11" height="4.100" fill="#e6c680"/></svg>
<div class="t " style="left:172.5px;top:313.15px;font-size:11.75px;letter-spacing:0.18px">grid</div>
<div class="t gr" style="left:406px;top:313.15px;font-size:11.75px;letter-spacing:-0.40px">17.12.2003 14:51</div>
<div class="t gr" style="left:546px;top:313.15px;font-size:11.75px;letter-spacing:-0.33px">Soubor BMP</div>
<div class="t gr" style="right:439px;top:313.15px;font-size:11.75px;letter-spacing:-0.44px">13 kB</div>
<svg class="abs" style="left:153px;top:332px;" width="16" height="16" viewBox="0 0 16 16"><rect x="1.500" y="2.500" width="13" height="12" fill="#f1ead8" stroke="#cfc7b2" stroke-width="0.600"/><rect x="2.500" y="3.500" width="11" height="4.600" fill="#2b86c9"/><path d="M2.500 7 Q6 5.800 9 7.200 T13.500 7 V9.600 H2.500 Z" fill="#2f8f6a"/><rect x="2.500" y="9.400" width="11" height="4.100" fill="#e6c680"/></svg>
<div class="t " style="left:172.5px;top:333.6px;font-size:11.75px;letter-spacing:-0.06px">Midday vision</div>
<div class="t gr" style="left:406px;top:333.6px;font-size:11.75px;letter-spacing:-0.40px">18.02.2004 21:30</div>
<div class="t gr" style="left:546px;top:333.6px;font-size:11.75px;letter-spacing:-0.56px">Soubor JPG</div>
<div class="t gr" style="right:439px;top:333.6px;font-size:11.75px;letter-spacing:-0.44px">22 kB</div>
<svg class="abs" style="left:153px;top:352.45px;" width="16" height="16" viewBox="0 0 16 16"><rect x="1.500" y="2.500" width="13" height="12" fill="#f1ead8" stroke="#cfc7b2" stroke-width="0.600"/><rect x="2.500" y="3.500" width="11" height="4.600" fill="#2b86c9"/><path d="M2.500 7 Q6 5.800 9 7.200 T13.500 7 V9.600 H2.500 Z" fill="#2f8f6a"/><rect x="2.500" y="9.400" width="11" height="4.100" fill="#e6c680"/></svg>
<div class="t " style="left:172.5px;top:354.05px;font-size:11.75px;letter-spacing:0.03px">Morning Bijou</div>
<div class="t gr" style="left:406px;top:354.05px;font-size:11.75px;letter-spacing:-0.40px">18.02.2004 21:13</div>
<div class="t gr" style="left:546px;top:354.05px;font-size:11.75px;letter-spacing:-0.56px">Soubor JPG</div>
<div class="t gr" style="right:439px;top:354.05px;font-size:11.75px;letter-spacing:-0.44px">25 kB</div>
<svg class="abs" style="left:153px;top:372.9px;" width="16" height="16" viewBox="0 0 16 16"><path d="M2.500 0.500 H9.500 L13.500 4.500 V15.500 H2.500 Z" fill="#fff" stroke="#9a9a9a"/><path d="M9.500 0.500 V4.500 H13.500" fill="#f2f2f2" stroke="#9a9a9a"/><circle cx="6.800" cy="8" r="2.300" fill="none" stroke="#9aa0a8" stroke-width="1.200"/><circle cx="9.200" cy="11" r="2.300" fill="#fff" stroke="#9aa0a8" stroke-width="1.200"/></svg>
<div class="t " style="left:172.5px;top:374.5px;font-size:11.75px;letter-spacing:-0.02px">picformat32.dll</div>
<div class="t gr" style="left:406px;top:374.5px;font-size:11.75px;letter-spacing:-0.29px">11.10.2000 14:11</div>
<div class="t gr" style="left:546px;top:374.5px;font-size:11.75px;letter-spacing:-0.37px">Rozšíření aplikace</div>
<div class="t gr" style="right:439px;top:374.5px;font-size:11.75px;letter-spacing:-0.28px">119 kB</div>
<svg class="abs" style="left:153px;top:393.35px;" width="16" height="16" viewBox="0 0 16 16"><path d="M2.500 1.200 L13 0.600 L15.800 2 V5.400 L13.500 6.200 L2.500 5.800 Z" fill="#b3226f"/><path d="M2.500 5.800 L13.500 6.200 L15.800 5.400 V9.800 L13.500 10.600 L2.500 10.200 Z" fill="#2a4c9c"/><path d="M2.500 10.200 L13.500 10.600 L15.800 9.800 V14 L13.500 15.300 L2.500 14.700 Z" fill="#2a7a44"/><path d="M0.300 2.200 L2.500 1.200 V14.700 L0.300 13.800 Z" fill="#e9e4dc"/><path d="M0.300 2.200 L2.500 3.200 M0.300 4.500 L2.500 5.800 M0.300 6.800 L2.500 8 M0.300 9 L2.500 10.200 M0.300 11.300 L2.500 12.500" stroke="#8a8580" stroke-width="0.500"/><path d="M2.500 3 H13.500 M2.500 7.800 H13.500 M2.500 12.300 H13.500" stroke="#f0d9a8" stroke-width="0.800"/><path d="M13.500 6.200 L15.800 5.400 M13.500 10.600 L15.800 9.800" stroke="#10203c" stroke-width="0.500"/></svg>
<div class="t " style="left:172.5px;top:394.95px;font-size:11.75px;letter-spacing:-0.59px">Rails</div>
<div class="t gr" style="left:406px;top:394.95px;font-size:11.75px;letter-spacing:-0.41px">15.03.2004 9:49</div>
<div class="t gr" style="left:546px;top:394.95px;font-size:11.75px;letter-spacing:-0.41px">WinRAR archiv</div>
<div class="t gr" style="right:439px;top:394.95px;font-size:11.75px;letter-spacing:-0.44px">19 kB</div>
<svg class="abs" style="left:153px;top:413.8px;" width="16" height="16" viewBox="0 0 16 16"><path d="M2.500 0.500 H9.500 L13.500 4.500 V15.500 H2.500 Z" fill="#fff" stroke="#9a9a9a"/><path d="M9.500 0.500 V4.500 H13.500" fill="#f2f2f2" stroke="#9a9a9a"/><path d="M4.500 6.500 H11.500 M4.500 8.500 H11.500 M4.500 10.500 H11.500 M4.500 12.500 H11.500" stroke="#a9a9a9" stroke-width="0.900"/></svg>
<div class="t " style="left:172.5px;top:415.4px;font-size:11.75px;letter-spacing:-0.22px">readme</div>
<div class="t gr" style="left:406px;top:415.4px;font-size:11.75px;letter-spacing:-0.40px">10.04.2008 10:29</div>
<div class="t gr" style="left:546px;top:415.4px;font-size:11.75px;letter-spacing:-0.03px">Textový dokument</div>
<div class="t gr" style="right:439px;top:415.4px;font-size:11.75px;letter-spacing:-0.46px">7 kB</div>
<svg class="abs" style="left:153px;top:434.25px;" width="16" height="16" viewBox="0 0 16 16"><rect x="1.500" y="2.500" width="13" height="12" fill="#f1ead8" stroke="#cfc7b2" stroke-width="0.600"/><rect x="2.500" y="3.500" width="11" height="4.600" fill="#2b86c9"/><path d="M2.500 7 Q6 5.800 9 7.200 T13.500 7 V9.600 H2.500 Z" fill="#2f8f6a"/><rect x="2.500" y="9.400" width="11" height="4.100" fill="#e6c680"/></svg>
<div class="t " style="left:172.5px;top:435.85px;font-size:11.75px;letter-spacing:-0.49px">sky</div>
<div class="t gr" style="left:406px;top:435.85px;font-size:11.75px;letter-spacing:-0.40px">22.01.2004 12:41</div>
<div class="t gr" style="left:546px;top:435.85px;font-size:11.75px;letter-spacing:-0.56px">Soubor JPG</div>
<div class="t gr" style="right:439px;top:435.85px;font-size:11.75px;letter-spacing:-0.44px">16 kB</div>
<svg class="abs" style="left:153px;top:454.7px;" width="16" height="16" viewBox="0 0 16 16"><rect x="1.500" y="2.500" width="13" height="12" fill="#f1ead8" stroke="#cfc7b2" stroke-width="0.600"/><rect x="2.500" y="3.500" width="11" height="4.600" fill="#2b86c9"/><path d="M2.500 7 Q6 5.800 9 7.200 T13.500 7 V9.600 H2.500 Z" fill="#2f8f6a"/><rect x="2.500" y="9.400" width="11" height="4.100" fill="#e6c680"/></svg>
<div class="t " style="left:172.5px;top:456.3px;font-size:11.75px;letter-spacing:-0.78px">skyNSWE</div>
<div class="t gr" style="left:406px;top:456.3px;font-size:11.75px;letter-spacing:-0.40px">10.02.2004 13:05</div>
<div class="t gr" style="left:546px;top:456.3px;font-size:11.75px;letter-spacing:-0.56px">Soubor JPG</div>
<div class="t gr" style="right:439px;top:456.3px;font-size:11.75px;letter-spacing:-0.44px">19 kB</div>
<svg class="abs" style="left:153px;top:475.15px;" width="16" height="16" viewBox="0 0 16 16"><rect x="1.500" y="2.500" width="13" height="12" fill="#f1ead8" stroke="#cfc7b2" stroke-width="0.600"/><rect x="2.500" y="3.500" width="11" height="4.600" fill="#2b86c9"/><path d="M2.500 7 Q6 5.800 9 7.200 T13.500 7 V9.600 H2.500 Z" fill="#2f8f6a"/><rect x="2.500" y="9.400" width="11" height="4.100" fill="#e6c680"/></svg>
<div class="t " style="left:172.5px;top:476.75px;font-size:11.75px;letter-spacing:-0.34px">Summer's Day</div>
<div class="t gr" style="left:406px;top:476.75px;font-size:11.75px;letter-spacing:-0.40px">18.02.2004 21:23</div>
<div class="t gr" style="left:546px;top:476.75px;font-size:11.75px;letter-spacing:-0.56px">Soubor JPG</div>
<div class="t gr" style="right:439px;top:476.75px;font-size:11.75px;letter-spacing:-0.44px">29 kB</div>
<svg class="abs" style="left:153px;top:495.6px;" width="16" height="16" viewBox="0 0 16 16"><rect x="0.500" y="2.500" width="15" height="11" fill="#fff" stroke="#7d8a99"/><rect x="3" y="5" width="4.500" height="6" fill="#1f6fc0"/><path d="M9 5.500 H13.500 M9 7.500 H13.500 M9 9.500 H13.500" stroke="#9aa5b1"/></svg>
<div class="t " style="left:172.5px;top:497.2px;font-size:11.75px;letter-spacing:-0.36px">sun</div>
<div class="t gr" style="left:406px;top:497.2px;font-size:11.75px;letter-spacing:-0.40px">20.05.2004 14:49</div>
<div class="t gr" style="left:546px;top:497.2px;font-size:11.75px;letter-spacing:-0.37px">Soubor DDS</div>
<div class="t gr" style="right:439px;top:497.2px;font-size:11.75px;letter-spacing:-0.44px">17 kB</div>
<svg class="abs" style="left:153px;top:516.05px;" width="16" height="16" viewBox="0 0 16 16"><path d="M1.500 2 L6 5 L4 7 L8.500 9 L7.500 11 L12 12.500 L11 14.500 L14.500 15" fill="none" stroke="#c94a5a" stroke-width="1.300"/><path d="M3 1 L5.500 6.500 M6.500 4.500 L9 10.500 M10 9 L12 14" stroke="#d98a95" stroke-width="0.900"/></svg>
<div class="t " style="left:172.5px;top:517.65px;font-size:11.75px;letter-spacing:-0.55px">SView</div>
<div class="t gr" style="left:406px;top:517.65px;font-size:11.75px;letter-spacing:-0.40px">27.03.2008 12:59</div>
<div class="t gr" style="left:546px;top:517.65px;font-size:11.75px;letter-spacing:-0.22px">Aplikace</div>
<div class="t gr" style="right:439px;top:517.65px;font-size:11.75px;letter-spacing:-0.42px">304 kB</div>
<svg class="abs" style="left:153px;top:536.5px;" width="16" height="16" viewBox="0 0 16 16"><path d="M1.500 5.500 H9 V15.500 H1.500 Z" fill="#fff" stroke="#555"/><path d="M3 8.500 H7.500 M3 10.500 H7.500 M3 12.500 H7.500" stroke="#777" stroke-width="0.900"/><circle cx="10.500" cy="5.500" r="4.700" fill="#f4d820" stroke="#8a7a10" stroke-width="0.700"/><text x="10.500" y="8.600" text-anchor="middle" font-family="Liberation Sans, sans-serif" font-weight="bold" font-size="8.500" fill="#333">?</text></svg>
<div class="t " style="left:172.5px;top:538.1px;font-size:11.75px;letter-spacing:-0.38px">sview</div>
<div class="t gr" style="left:406px;top:538.1px;font-size:11.75px;letter-spacing:-0.40px">10.04.2008 10:31</div>
<div class="t gr" style="left:546px;top:538.1px;font-size:11.75px;letter-spacing:-0.19px">Soubor kompilova...</div>
<div class="t gr" style="right:439px;top:538.1px;font-size:11.75px;letter-spacing:-0.42px">283 kB</div>
<svg class="abs" style="left:153px;top:556.95px;" width="16" height="16" viewBox="0 0 16 16"><path d="M3.500 2.500 H15 L13.500 15 H1.500 Z" fill="#dff1f8" stroke="#7f9aa8" stroke-width="0.800"/><path d="M4 3.500 H13.800 L12.600 14 H2.600 Z" fill="#8fd0e2"/><path d="M4 3.500 H8.500 L6.800 14 H2.600 Z" fill="#b5e2ee"/><path d="M3.500 1.500 H15" stroke="#5b7d8c" stroke-width="1.400" stroke-dasharray="1 1"/></svg>
<div class="t " style="left:172.5px;top:558.55px;font-size:11.75px;letter-spacing:-0.58px">TC_Displaybase</div>
<div class="t gr" style="left:406px;top:558.55px;font-size:11.75px;letter-spacing:-0.40px">07.02.2004 13:58</div>
<div class="t gr" style="left:546px;top:558.55px;font-size:11.75px;letter-spacing:-0.36px">Soubor S</div>
<div class="t gr" style="right:439px;top:558.55px;font-size:11.75px;letter-spacing:-0.44px">42 kB</div>
<svg class="abs" style="left:153px;top:577.4px;" width="16" height="16" viewBox="0 0 16 16"><path d="M2.500 0.500 H9.500 L13.500 4.500 V15.500 H2.500 Z" fill="#fff" stroke="#9a9a9a"/><path d="M9.500 0.500 V4.500 H13.500" fill="#f2f2f2" stroke="#9a9a9a"/><circle cx="6.800" cy="8" r="2.300" fill="none" stroke="#9aa0a8" stroke-width="1.200"/><circle cx="9.200" cy="11" r="2.300" fill="#fff" stroke="#9aa0a8" stroke-width="1.200"/></svg>
<div class="t " style="left:172.5px;top:579px;font-size:11.75px;letter-spacing:-0.08px">trainlib.ocx</div>
<div class="t gr" style="left:406px;top:579px;font-size:11.75px;letter-spacing:-0.40px">25.03.2008 12:39</div>
<div class="t gr" style="left:546px;top:579px;font-size:11.75px;letter-spacing:-0.32px">Ovládací prvek Ac...</div>
<div class="t gr" style="right:439px;top:579px;font-size:11.75px;letter-spacing:-0.42px">276 kB</div>
<svg class="abs" style="left:153px;top:597.85px;" width="16" height="16" viewBox="0 0 16 16"><path d="M2.500 0.500 H9.500 L13.500 4.500 V15.500 H2.500 Z" fill="#fff" stroke="#9a9a9a"/><path d="M9.500 0.500 V4.500 H13.500" fill="#f2f2f2" stroke="#9a9a9a"/><circle cx="6.800" cy="8" r="2.300" fill="none" stroke="#9aa0a8" stroke-width="1.200"/><circle cx="9.200" cy="11" r="2.300" fill="#fff" stroke="#9aa0a8" stroke-width="1.200"/></svg>
<div class="t " style="left:172.5px;top:599.45px;font-size:11.75px;letter-spacing:-0.00px">trsimfile.dll</div>
<div class="t gr" style="left:406px;top:599.45px;font-size:11.75px;letter-spacing:-0.40px">20.03.2008 13:13</div>
<div class="t gr" style="left:546px;top:599.45px;font-size:11.75px;letter-spacing:-0.37px">Rozšíření aplikace</div>
<div class="t gr" style="right:439px;top:599.45px;font-size:11.75px;letter-spacing:-0.42px">100 kB</div>
<svg class="abs" style="left:153px;top:618.3px;" width="16" height="16" viewBox="0 0 16 16"><path d="M2.500 0.500 H9.500 L13.500 4.500 V15.500 H2.500 Z" fill="#fff" stroke="#9a9a9a"/><path d="M9.500 0.500 V4.500 H13.500" fill="#f2f2f2" stroke="#9a9a9a"/><circle cx="6.800" cy="8" r="2.300" fill="none" stroke="#9aa0a8" stroke-width="1.200"/><circle cx="9.200" cy="11" r="2.300" fill="#fff" stroke="#9aa0a8" stroke-width="1.200"/></svg>
<div class="t " style="left:172.5px;top:619.9px;font-size:11.75px;letter-spacing:-0.10px">trstex.dll</div>
<div class="t gr" style="left:406px;top:619.9px;font-size:11.75px;letter-spacing:-0.40px">20.03.2008 13:12</div>
<div class="t gr" style="left:546px;top:619.9px;font-size:11.75px;letter-spacing:-0.37px">Rozšíření aplikace</div>
<div class="t gr" style="right:439px;top:619.9px;font-size:11.75px;letter-spacing:-0.44px">44 kB</div>
<div class="t " style="left:14px;top:889px;color:#3b4a63;font-size:11.75px;letter-spacing:-0.23px">Počet položek: 21</div>
<div class="abs" style="left:112px;top:889px;width:1px;height:15px;background:#e6e6e6;"></div>
<div class="t " style="left:124px;top:889px;color:#3b4a63;font-size:11.75px;letter-spacing:-0.28px">Počet vybraných položek: 1; 6,64 kB</div>
<!--/EX-->
</div>

<div id="np">
<!--NP-->
<!-- title bar -->
<svg class="abs" style="left:9px;top:6px" width="16" height="16" viewBox="0 0 16 16">
  <path d="M3.5 2.5 L13.5 2.5 L13.5 14 L2 14 Z" fill="#e9f3f7" stroke="#8fa9b5" stroke-width="1"/>
  <path d="M4 3 L12.5 3 L11.5 13 L3 13 Z" fill="#7fc8da"/>
  <path d="M4 3 L8 3 L6.5 13 L3 13 Z" fill="#a5dbe7"/>
  <rect x="3.5" y="1.5" width="10" height="1.6" fill="#6f8f9c"/>
</svg>
<div class="t" style="left:28px;top:7px;font-size:11.75px;letter-spacing:-0.21px">readme – Poznámkový blok</div>
<svg class="abs" style="left:1000px;top:0" width="123" height="29" viewBox="0 0 123 29" fill="none" stroke="#111" stroke-width="1.1">
  <path d="M6.5 14.5 H16.5"/>
  <rect x="50.5" y="9.5" width="9" height="9"/>
  <path d="M95.5 9.5 L105.5 19.5 M105.5 9.5 L95.5 19.5"/>
</svg>
<!-- menu -->
<div class="t" style="left:6px;top:32px;font-size:11.75px;letter-spacing:-0.17px">Soubor</div>
<div class="t" style="left:57px;top:32px;font-size:11.75px;letter-spacing:-0.27px">Úpravy</div>
<div class="t" style="left:106px;top:32px;font-size:11.75px;letter-spacing:-0.20px">Formát</div>
<div class="t" style="left:157px;top:32px;font-size:11.75px;letter-spacing:-0.28px">Zobrazení</div>
<div class="t" style="left:221px;top:32px;font-size:11.75px;letter-spacing:-0.19px">Nápověda</div>
<div class="abs" style="left:0;top:47px;width:1122px;height:1px;background:#ededed"></div>
<!-- text -->
<div id="txt">SView 2.2.237 - 27th March 2008
~~~~~~~~~~~~~~~~~~~~~~~~~~~~~
© 2004-2008 Paul Gausden


****************************************************************
**************                                       ***********
************** UNINSTALL ANY PREVIOUS VERSIONS FIRST ***********
**************                                       ***********
****************************************************************


Double click on the SView22.msi file to install this software.

Version 2.2 - April 2008
~~~~~~~~~~~~~~~~~~~~~~~~
Fix - no zero byte files created if the file referenced by con or wag file does not exist.
Fix - Quotes now allowed in CON/WAG/ENG file &amp; folder names.
Fix - Improved IM file support (fewer crashes).
Fix - Adjusted animation rate dependant on FPS in model.
Fix - Stuck in loop if opened second shape with hierarchy display.
Fix - Installer now includes dx8vb.dll for vista users.
Added - Finer control over camera position with Ctrl+Shift keys
Added - Reload WAG/ENG with Ctrl+F5 key


Version 2.1.225 - 21st Sept 2007
~~~~~~~~~~~~~~~
- Support for more shaders and sub objects used by MSTS (Diffuse, GlossMap etc) - Sketchup MSTS models without - textures and "fixed" models should now load correctly.
- Fixed - Screenshot location now removes the .screenshot from the filename after a change.
- Fixed - models with textures of 16x16 or less failed to load.
- Fixed - hierarchy display now shows correct shader name.
- Ability to load complex bounding boxes from MSTS SD files.
- Can now Open MSTS ENG and WAG files, including freight anims.
- Can now open MSTS Consist files (.CON)
- Some support for loading Trainz (TRS) models (config.txt) and meshes (.IM files)
</div>
<!-- vertical scrollbar -->
<div class="abs" style="left:1106px;top:49px;width:16px;height:635px;background:#f0f0f0"></div>
<div class="abs" style="left:1107px;top:65px;width:14px;height:127px;background:#cdcdcd"></div>
<svg class="abs" style="left:1106px;top:49px" width="16" height="17" viewBox="0 0 16 17" fill="none" stroke="#505050" stroke-width="1.6"><path d="M4.5 10.5 L8 7 L11.5 10.5"/></svg>
<svg class="abs" style="left:1106px;top:667px" width="16" height="17" viewBox="0 0 16 17" fill="none" stroke="#505050" stroke-width="1.6"><path d="M4.5 6.5 L8 10 L11.5 6.5"/></svg>
<!-- horizontal scrollbar -->
<div class="abs" style="left:0;top:684px;width:1122px;height:16px;background:#f0f0f0"></div>
<div class="abs" style="left:17px;top:685px;width:620px;height:14px;background:#cdcdcd"></div>
<svg class="abs" style="left:0px;top:684px" width="17" height="16" viewBox="0 0 17 16" fill="none" stroke="#505050" stroke-width="1.6"><path d="M10.5 4.5 L7 8 L10.5 11.5"/></svg>
<svg class="abs" style="left:1089px;top:684px" width="17" height="16" viewBox="0 0 17 16" fill="none" stroke="#505050" stroke-width="1.6"><path d="M6.5 4.5 L10 8 L6.5 11.5"/></svg>
<!-- status bar -->
<div class="abs" style="left:0;top:700px;width:1122px;height:22px;background:#f0f0f0;border-top:1px solid #e3e3e3"></div>
<div class="abs" style="left:703px;top:703px;width:1px;height:18px;background:#d9d9d9"></div>
<div class="abs" style="left:839px;top:703px;width:1px;height:18px;background:#d9d9d9"></div>
<div class="abs" style="left:888px;top:703px;width:1px;height:18px;background:#d9d9d9"></div>
<div class="abs" style="left:1005px;top:703px;width:1px;height:18px;background:#d9d9d9"></div>
<div class="t" style="left:714px;top:705px;font-size:11.75px;letter-spacing:-0.38px">Řádek 1, Sloupec 1</div>
<div class="t" style="left:848px;top:705px;font-size:11.75px;letter-spacing:-0.43px">100 %</div>
<div class="t" style="left:896px;top:705px;font-size:11.75px;letter-spacing:-0.55px">Windows (CRLF)</div>
<div class="t" style="left:1013px;top:705px;font-size:11.75px;letter-spacing:-0.56px">ANSI</div>
<svg class="abs" style="left:1109px;top:709px" width="12" height="12" viewBox="0 0 12 12" fill="#b8b8b8"><rect x="8" y="2" width="2" height="2"/><rect x="5" y="5" width="2" height="2"/><rect x="8" y="5" width="2" height="2"/><rect x="2" y="8" width="2" height="2"/><rect x="5" y="8" width="2" height="2"/><rect x="8" y="8" width="2" height="2"/></svg>
<!--/NP-->
</div>
</body>
</html>
